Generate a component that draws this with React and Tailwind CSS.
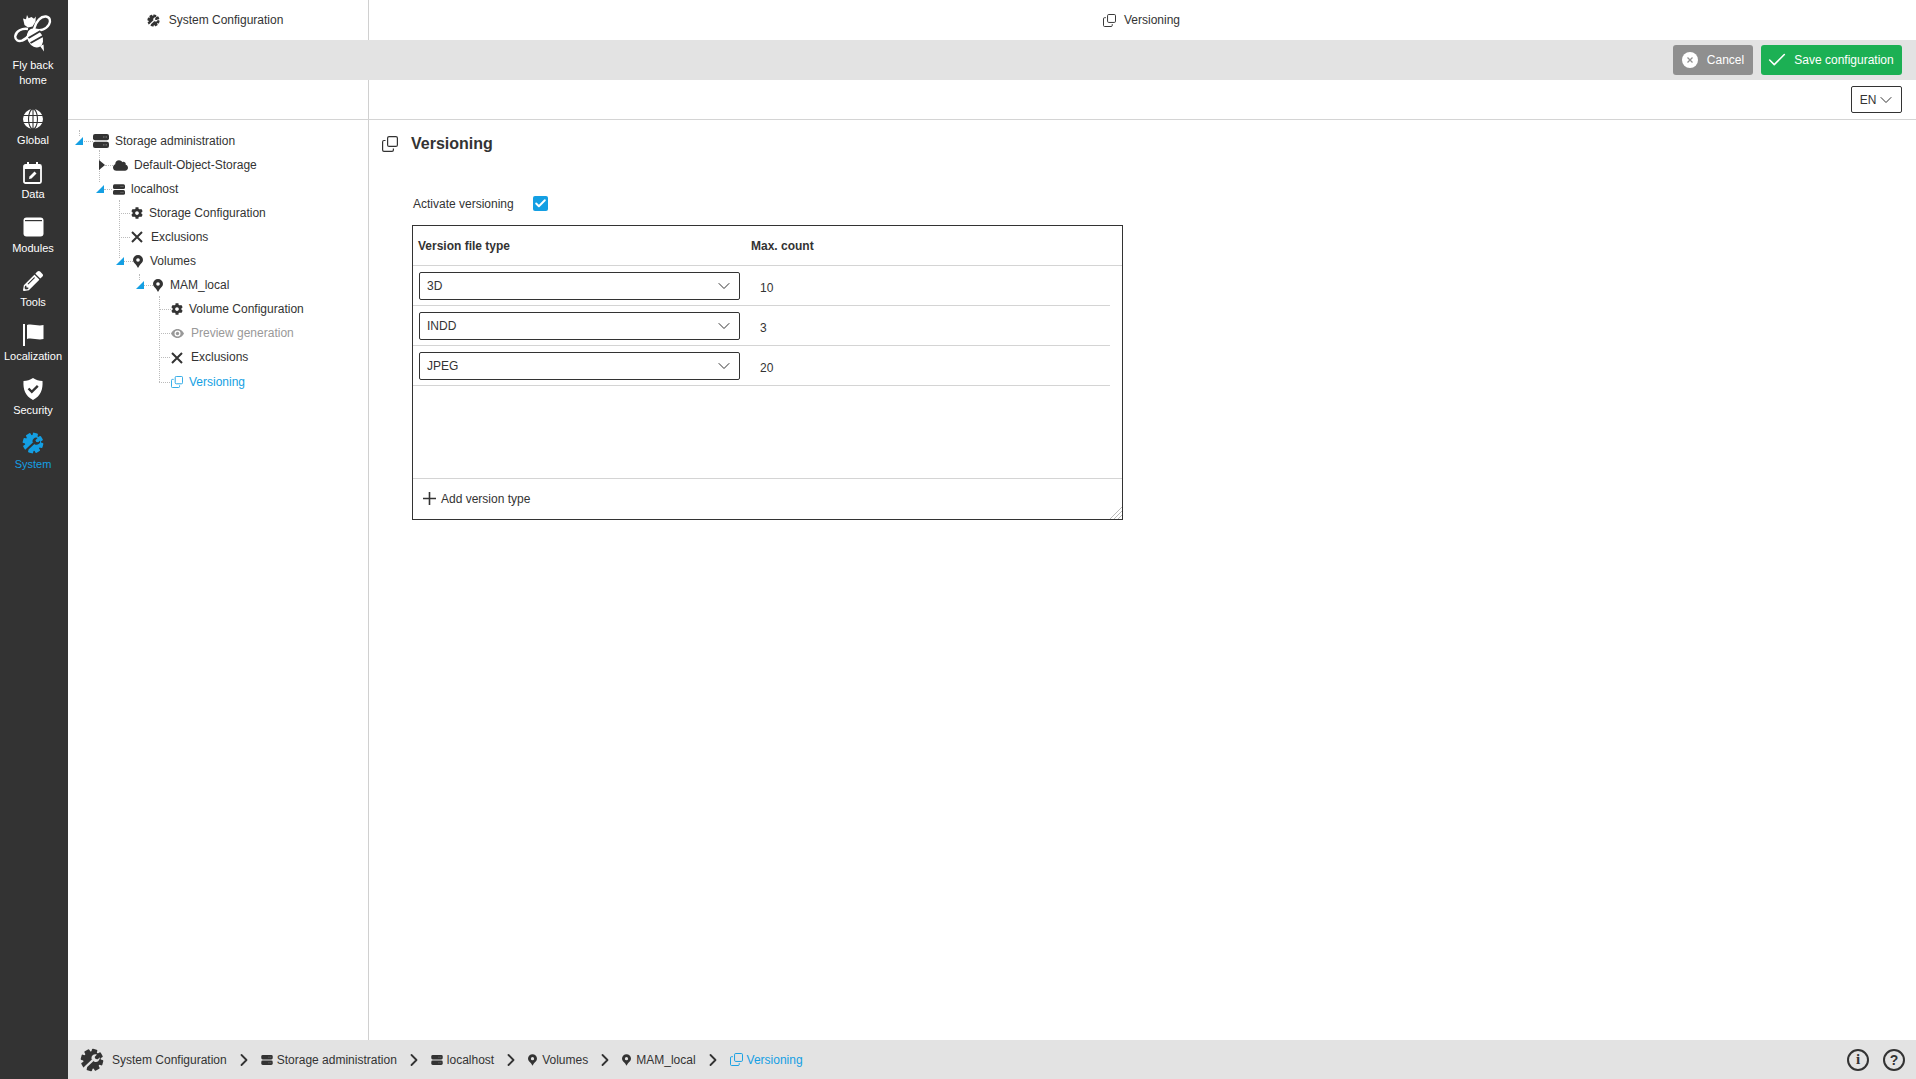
import React from "react";
import { ChevronDown, ChevronRight, Check } from "lucide-react";
import { FaCloud, FaCog, FaPencilAlt } from "react-icons/fa";

const BLUE = "#149fe3";

function Bee() {
  return (
    <svg width="38" height="38" viewBox="0 0 38 38" fill="none" stroke="white" strokeWidth="2.400">
      <path d="M20 15C22 7 27 2 32 2.500c4 .5 5 4.500 3 8-3 5-9 7-15 4.500z" />
      <path d="M14 15C8 14 2 17 1.300 22c-.5 4 3 6 7 4.500 3-1 5-3 7-6" />
      <path d="M13 1l1.600 3.200L17.500 3l2.500 1.800 1.800-2.300-.3 5-3 5-4.500 1-3.500-2.500L9 4.500l3 .8z" fill="white" stroke="none" />
      <ellipse cx="21" cy="24" rx="7.500" ry="10" transform="rotate(-28 21 24)" fill="white" stroke="none" />
      <path d="M14.500 24l12-7M16.500 29l12.500-7" stroke="#333" strokeWidth="2" />
      <path d="M26 32l4 5.500-.5-7z" fill="white" stroke="none" />
    </svg>
  );
}

function Globe() {
  return (
    <svg width="20" height="20" viewBox="0 0 20 20">
      <circle cx="10" cy="10" r="10" fill="white" />
      <g stroke="#333" strokeWidth="1.100" fill="none">
        <ellipse cx="10" cy="10" rx="4.500" ry="10" />
        <path d="M10 0v20M0 6.500h20M0 13.500h20" />
      </g>
    </svg>
  );
}

function CalendarEdit() {
  return (
    <svg width="20" height="22" viewBox="0 0 20 22" fill="none">
      <rect x="1" y="3" width="17" height="18" rx="1.500" stroke="white" strokeWidth="1.800" />
      <path d="M1 4h17v3H1z" fill="white" />
      <path d="M5 0v4M14 0v4" stroke="white" strokeWidth="2" />
      <path d="M6 17l.5-2.500 5-5 2 2-5 5z" fill="white" />
    </svg>
  );
}

function ModuleIcon() {
  return (
    <svg width="21" height="20" viewBox="0 0 21 20">
      <rect x="0.500" y="0.500" width="20" height="19" rx="3" fill="white" />
      <rect x="2" y="3" width="17" height="1.200" fill="#333" />
    </svg>
  );
}

function FlagIcon() {
  return (
    <svg width="21" height="22" viewBox="0 0 21 22" fill="white">
      <rect x="0" y="0" width="2" height="22" />
      <path d="M4 1c5-1.500 11 1.500 16.500 0v14C15 16.500 9 13.500 4 15z" />
    </svg>
  );
}

function ShieldCheck() {
  return (
    <svg width="20" height="22" viewBox="0 0 20 22">
      <path d="M10 0c3 2 6 2.800 9.500 3 .5 8-1.500 15-9.500 19C2 18 0 11 .5 3 4 2.800 7 2 10 0z" fill="white" />
      <path d="M5.500 10.500l3.300 3.300 6-6" stroke="#333" strokeWidth="2.400" fill="none" />
    </svg>
  );
}

function GearWrench({ color, bg, size }) {
  const teeth = [0, 45, 90, 135, 180, 225, 270, 315];
  return (
    <svg width={size} height={size} viewBox="0 0 24 24">
      <circle cx="12" cy="12" r="8.800" fill={color} />
      {teeth.map((a) => (
        <rect key={a} x="9.200" y="0.800" width="5.600" height="5" rx="1" fill={color} transform={`rotate(${a + 15} 12 12)`} />
      ))}
      <path d="M4 20.500L13 12" stroke={bg} strokeWidth="2.400" />
      <path d="M11.500 11a4 4 0 0 1 5.500-4.500l-2.400 2.400 1 2 2.200.4 2-2a4 4 0 0 1-5.800 4.200z" fill={bg} />
    </svg>
  );
}

function Server({ className }) {
  return (
    <svg className={className} viewBox="0 0 16 14" fill="#333">
      <rect x="0" y="0" width="16" height="6.200" rx="2" />
      <rect x="0" y="7.800" width="16" height="6.200" rx="2" />
      <path d="M10 3h1.500M12.500 3H14M10 10.900h1.500M12.500 10.900H14" stroke="#999" strokeWidth="0.800" />
    </svg>
  );
}

function Pin({ className }) {
  return (
    <svg className={className} viewBox="0 0 10 13">
      <path fillRule="evenodd" d="M5 0a5 5 0 0 1 5 5c0 2.500-2.500 3.500-3.500 5.500L5 13l-1.500-2.500C2.500 8.500 0 7.500 0 5a5 5 0 0 1 5-5zm0 3.200a1.800 1.800 0 1 0 0 3.600 1.800 1.800 0 0 0 0-3.600z" fill="#333" />
    </svg>
  );
}

function CopyIcon({ className, color }) {
  return (
    <svg className={className} viewBox="0 0 16 16" fill="none" stroke={color} strokeWidth="1.200">
      <rect x="5.600" y="0.600" width="9.800" height="9.800" rx="1.500" />
      <path d="M3.500 4.500H2A1.400 1.400 0 0 0 .6 5.900V14A1.400 1.400 0 0 0 2 15.400h8A1.400 1.400 0 0 0 11.400 14v-1.500" />
    </svg>
  );
}

function EyeIcon() {
  return (
    <svg className="w-[13px] h-[9px]" viewBox="0 0 13 9">
      <path fillRule="evenodd" d="M6.500 0C10 0 12 2.500 13 4.500 12 6.500 10 9 6.500 9S1 6.500 0 4.500C1 2.500 3 0 6.500 0zm0 1.500a3 3 0 1 0 0 6 3 3 0 0 0 0-6z" fill="#999" />
      <circle cx="6.500" cy="4.500" r="1.700" fill="#999" />
    </svg>
  );
}

function XMark({ className, color = "#333", sw = 2 }) {
  return (
    <svg className={className} viewBox="0 0 12 12" fill="none" stroke={color} strokeWidth={sw}>
      <path d="M1 1l10 10M11 1L1 11" />
    </svg>
  );
}

function Open({ className }) {
  return (
    <svg className={className} width="8" height="8" viewBox="0 0 8 8">
      <path d="M8 0v8H0z" fill={BLUE} />
    </svg>
  );
}

function Closed({ className }) {
  return (
    <svg className={className} width="6" height="10" viewBox="0 0 6 10">
      <path d="M0 0l6 5-6 5z" fill="#333" />
    </svg>
  );
}

const navItems = [
  { label: "Global", icon: <Globe /> },
  { label: "Data", icon: <CalendarEdit /> },
  { label: "Modules", icon: <ModuleIcon /> },
  { label: "Tools", icon: <FaPencilAlt className="w-[20px] h-[20px] text-white" /> },
  { label: "Localization", icon: <FlagIcon /> },
  { label: "Security", icon: <ShieldCheck /> },
  { label: "System", icon: <GearWrench color={BLUE} bg="#333" size={22} />, active: true },
];

function Sidebar() {
  return (
    <aside className="w-[68px] shrink-0 bg-[#333333] flex flex-col items-center pr-[2px] text-[11px] text-white">
      <div className="h-[104px] pt-[14px] flex flex-col items-center">
        <Bee />
        <div className="text-center leading-[15px] mt-[6px]">
          Fly back
          <br />
          home
        </div>
      </div>
      {navItems.map((n) => (
        <div key={n.label} className={`h-[54px] w-full flex flex-col items-center ${n.active ? "text-[#149fe3]" : "text-white"}`}>
          <div className="h-[27px] pt-[2px] flex items-center justify-center">{n.icon}</div>
          <div className="leading-[14px] mt-[2px]">{n.label}</div>
        </div>
      ))}
    </aside>
  );
}

const dot = "border-dotted border-[#bbbbbb]";

function Tree() {
  return (
    <div className="relative pt-[9px] text-[12px] text-[#333333]">
      {/* level guides of the tree diagram */}
      <span className={`absolute left-[11px] top-[10px] h-[6px] border-l ${dot}`} />
      <span className={`absolute left-[31px] top-[30px] h-[32px] border-l ${dot}`} />
      <span className={`absolute left-[51px] top-[80px] h-[58px] border-l ${dot}`} />
      <span className={`absolute left-[71px] top-[154px] h-[6px] border-l ${dot}`} />
      <span className={`absolute left-[91px] top-[176px] h-[86px] border-l ${dot}`} />

      <Row pl="pl-[7px]" stub="left-[16px] w-[9px]" toggle={<Open />} icon={<Server className="w-[16px] h-[14px] ml-[10px] mr-[6px]" />} text="Storage administration" />
      <Row pl="pl-[31px]" stub="left-[37px] w-[8px]" toggle={<Closed />} icon={<FaCloud className="w-[15px] h-[15px] ml-[8px] mr-[6px] text-[#333333]" />} text="Default-Object-Storage" />
      <Row pl="pl-[28px]" stub="left-[36px] w-[8px]" toggle={<Open />} icon={<Server className="w-[12px] h-[11px] ml-[9px] mr-[6px]" />} text="localhost" />
      <Row pl="pl-[63px]" stub="left-[51px] w-[11px]" icon={<FaCog className="w-[12px] h-[12px] mr-[6px] text-[#333333]" />} text="Storage Configuration" />
      <Row pl="pl-[63px]" stub="left-[51px] w-[11px]" icon={<XMark className="w-[12px] h-[12px] mr-[8px]" />} text="Exclusions" />
      <Row pl="pl-[48px]" stub="left-[56px] w-[9px]" toggle={<Open />} icon={<Pin className="w-[10px] h-[13px] ml-[9px] mr-[7px]" />} text="Volumes" />
      <Row pl="pl-[68px]" stub="left-[76px] w-[9px]" toggle={<Open />} icon={<Pin className="w-[10px] h-[13px] ml-[9px] mr-[7px]" />} text="MAM_local" />
      <Row pl="pl-[103px]" stub="left-[91px] w-[12px]" icon={<FaCog className="w-[12px] h-[12px] mr-[6px] text-[#333333]" />} text="Volume Configuration" />
      <Row pl="pl-[103px]" stub="left-[91px] w-[11px]" icon={<span className="w-[13px] mr-[7px] flex"><EyeIcon /></span>} text="Preview generation" textClass="text-[#999999]" />
      <Row pl="pl-[103px]" stub="left-[91px] w-[11px]" icon={<XMark className="w-[12px] h-[12px] mr-[8px] mt-px" />} text="Exclusions" />
      <Row pl="pl-[103px]" stub="left-[91px] w-[11px]" cls="mt-px" icon={<CopyIcon className="w-[12px] h-[12px] mr-[6px]" color={BLUE} />} text="Versioning" textClass="text-[#149fe3]" />
    </div>
  );
}

function Row({ pl, stub, toggle, icon, text, textClass, cls }) {
  return (
    <div className={`relative h-[24px] flex items-center ${pl} ${cls || ""}`}>
      <span className={`absolute top-[12px] border-t ${dot} ${stub}`} />
      {toggle}
      {icon}
      <span className={textClass}>{text}</span>
    </div>
  );
}

function Select({ value }) {
  return (
    <div className="w-[321px] h-[28px] border border-[#333333] rounded-[2px] flex items-center justify-between pl-[7px] pr-[5px] text-[12px] bg-white">
      <span>{value}</span>
      <ChevronDown className="w-[20px] h-[20px] text-[#333333]" strokeWidth={1.200} />
    </div>
  );
}

function VersionRow({ type, count }) {
  return (
    <div className="h-[40px] flex mr-[12px] border-b border-[#d4d4d4]">
      <div className="pl-[6px] pt-[6px] w-[412px] shrink-0">
        <Select value={type} />
      </div>
      <div className="text-[12px] pt-[14px] leading-[16px] -ml-[65px]">{count}</div>
    </div>
  );
}

function VersionTable() {
  return (
    <div className="relative w-[711px] h-[295px] border border-[#333333] flex flex-col text-[#333333]">
      <div className="h-[40px] shrink-0 border-b border-[#d4d4d4] flex items-center text-[12px] font-bold">
        <div className="pl-[5px] w-[338px]">Version file type</div>
        <div>Max. count</div>
      </div>
      <VersionRow type="3D" count="10" />
      <VersionRow type="INDD" count="3" />
      <VersionRow type="JPEG" count="20" />
      <div className="flex-1" />
      <div className="h-[41px] shrink-0 border-t border-[#d4d4d4] flex items-center pl-[10px] pb-[1px] gap-[5px] text-[12px]">
        <svg className="w-[13px] h-[13px]" viewBox="0 0 13 13" stroke="#333" strokeWidth="1.600">
          <path d="M6.500 0v13M0 6.500h13" />
        </svg>
        <span>Add version type</span>
      </div>
      <svg className="absolute right-0 bottom-0" width="12" height="12" viewBox="0 0 12 12" stroke="#aaaaaa" strokeWidth="0.800">
        <path d="M0 12L12 0M4 12l8-8M8 12l4-4" />
      </svg>
    </div>
  );
}

function Crumb({ icon, text, blue, gap }) {
  return (
    <div className={`flex items-center ${gap || "gap-[4px]"} ${blue ? "text-[#149fe3]" : ""}`}>
      {icon}
      <span>{text}</span>
    </div>
  );
}

function Sep() {
  return <ChevronRight className="w-[20px] h-[20px] mx-[7px] text-[#333333]" strokeWidth={2.200} />;
}

export default function App() {
  return (
    <div className="w-[1916px] h-[1079px] flex overflow-hidden bg-white text-[#333333] font-['Liberation_Sans',Arial,sans-serif]">
      <Sidebar />
      <div className="flex-1 flex flex-col min-w-0">
        <div className="h-[40px] shrink-0 flex text-[12px]">
          <div className="w-[301px] shrink-0 border-r border-[#d0d0d0] flex items-center justify-center gap-[9px] pr-[6px]">
            <GearWrench color="#333" bg="white" size={13} />
            <span>System Configuration</span>
          </div>
          <div className="flex-1 flex items-center justify-center gap-[8px] pr-[2px]">
            <CopyIcon className="w-[13px] h-[13px]" color="#333" />
            <span>Versioning</span>
          </div>
        </div>

        <div className="h-[40px] shrink-0 bg-[#e3e3e3] flex items-center justify-end pr-[14px] gap-[8px] text-[12px] text-white">
          <button className="h-[30px] w-[80px] bg-[#8f8f8f] rounded-[3px] flex items-center justify-center gap-[9px]">
            <span className="w-[16px] h-[16px] rounded-full bg-white flex items-center justify-center">
              <XMark className="w-[6px] h-[6px]" color="#8f8f8f" sw={2.500} />
            </span>
            <span>Cancel</span>
          </button>
          <button className="h-[30px] w-[141px] bg-[#1cb054] rounded-[3px] flex items-center justify-center gap-[6px] pr-[3px]">
            <Check className="w-[22px] h-[22px]" strokeWidth={1.700} />
            <span>Save configuration</span>
          </button>
        </div>

        <div className="h-[40px] shrink-0 flex border-b border-[#d4d4d4]">
          <div className="w-[301px] shrink-0 border-r border-[#d0d0d0]" />
          <div className="flex-1 flex items-center justify-end pr-[14px]">
            <div className="w-[51px] h-[27px] border border-[#333333] rounded-[2px] flex items-center justify-center text-[12px]">
              <span>EN</span>
              <ChevronDown className="w-[20px] h-[20px] -mr-[3px]" strokeWidth={1.200} />
            </div>
          </div>
        </div>

        <div className="flex-1 flex min-h-0">
          <div className="w-[301px] shrink-0 border-r border-[#d0d0d0]">
            <Tree />
          </div>
          <div className="flex-1 min-w-0 pl-[43px] pt-[16px]">
            <div className="flex items-center -ml-[30px] gap-[13px] h-[16px]">
              <CopyIcon className="w-[16px] h-[16px]" color="#333" />
              <h1 className="text-[16px] font-bold leading-[16px]">Versioning</h1>
            </div>
            <div className="flex items-center mt-[43px] h-[16px] text-[12px]">
              <span className="w-[121px] pl-px pt-[2px]">Activate versioning</span>
              <span className="w-[15px] h-[15px] rounded-[2px] bg-[#149fe3] flex items-center justify-center">
                <Check className="w-[13px] h-[13px] text-white" strokeWidth={3.500} />
              </span>
            </div>
            <div className="mt-[14px]">
              <VersionTable />
            </div>
          </div>
        </div>

        <div className="h-[39px] shrink-0 bg-[#e3e3e3] flex items-center pl-[12px] pr-[11px] text-[12px] text-[#333333]">
          <div className="flex items-center gap-[8px]">
            <GearWrench color="#333" bg="#e3e3e3" size={24} />
            <span>System Configuration</span>
          </div>
          <Sep />
          <Crumb icon={<Server className="w-[12px] h-[10px]" />} text="Storage administration" />
          <Sep />
          <Crumb icon={<Server className="w-[12px] h-[10px]" />} text="localhost" />
          <Sep />
          <Crumb gap="gap-[5px]" icon={<Pin className="w-[9px] h-[12px]" />} text="Volumes" />
          <Sep />
          <Crumb gap="gap-[5px]" icon={<Pin className="w-[9px] h-[12px]" />} text="MAM_local" />
          <Sep />
          <Crumb blue icon={<CopyIcon className="w-[13px] h-[13px]" color={BLUE} />} text="Versioning" />
          <div className="ml-auto flex items-center gap-[14px]">
            <span className="w-[22px] h-[22px] rounded-full border-2 border-[#333333] flex items-center justify-center font-['Liberation_Serif',serif] font-bold text-[15px] leading-none">i</span>
            <span className="w-[22px] h-[22px] rounded-full border-2 border-[#333333] flex items-center justify-center font-bold text-[14px] leading-none">?</span>
          </div>
        </div>
      </div>
    </div>
  );
}
